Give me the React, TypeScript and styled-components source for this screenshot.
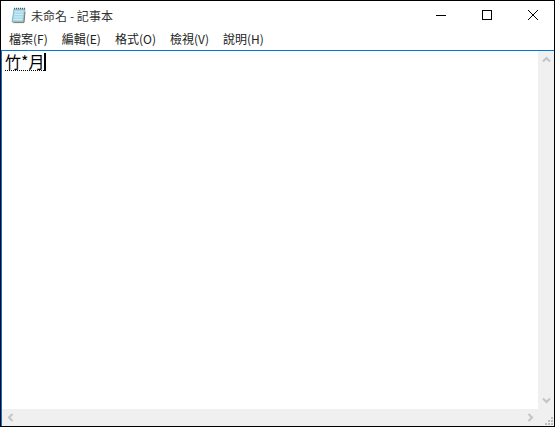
import React from "react";
import styled, { createGlobalStyle } from "styled-components";

const Global = createGlobalStyle`
  html, body { margin: 0; padding: 0; background: #fff; }
  body { font-family: "Noto Sans CJK TC", "Liberation Sans", sans-serif; }
`;

const Win = styled.div`
  box-sizing: border-box;
  width: 555px;
  height: 427px;
  border: 1px solid #000;
  display: flex;
  flex-direction: column;
  overflow: hidden;
  background: #fff;
`;
const TitleBar = styled.div`
  height: 29px;
  display: flex;
  align-items: flex-start;
  flex: none;
`;
const AppIcon = styled.svg`
  width: 16px;
  height: 17px;
  margin: 6px 5px 0 9px;
  flex: none;
`;
const Title = styled.div`
  flex: 1;
  font-size: 12px;
  line-height: 17px;
  padding-top: 6px;
  color: #333;
  letter-spacing: 0.05px;
`;
const Controls = styled.div`
  display: flex;
  height: 100%;
`;
const Ctl = styled.div`
  box-sizing: border-box;
  width: 46px;
  height: 27px;
  padding-left: 4px;
  display: flex;
  align-items: center;
  justify-content: center;
`;
const MenuBar = styled.div`
  height: 20px;
  display: flex;
  flex: none;
  gap: 14px;
  padding-left: 8px;
  align-items: flex-start;
  border-bottom: 1px solid #0078d7;
  font-size: 12px;
  color: #222;
`;
const MenuItem = styled.span`
  display: block;
  line-height: 18px;
  white-space: nowrap;
`;
const Body = styled.div`
  flex: 1;
  display: grid;
  grid-template-columns: 1fr 16px;
  grid-template-rows: 1fr 17px;
  min-height: 0;
  border-left: 1px solid #0078d7;
`;
const Editor = styled.div`
  padding: 2px 0 0 3px;
  display: flex;
  align-items: flex-start;
  background: #fff;
`;
const Composition = styled.span`
  font-family: "Noto Sans CJK TC", sans-serif;
  font-size: 16px;
  line-height: 17px;
  height: 17px;
  color: #000;
  border-bottom: 1px dotted #000;
  white-space: nowrap;
  display: block;
`;
const Caret = styled.span`
  display: block;
  width: 2px;
  height: 18px;
  background: #000;
`;
const VTrack = styled.div`
  background: #f0f0f0;
  display: flex;
  flex-direction: column;
  justify-content: space-between;
`;
const HTrack = styled.div`
  background: #f0f0f0;
  display: flex;
  justify-content: space-between;
`;
const Corner = styled.div`
  background: #f0f0f0;
  display: flex;
  align-items: flex-end;
  justify-content: flex-end;
`;
const ArrowBox = styled.div`
  width: 16px;
  height: 17px;
  display: flex;
  align-items: center;
  justify-content: center;
`;

const Arrow = ({ d }: { d: string }) => (
  <svg width="9" height="9" viewBox="0 0 9 9">
    <path d={d} fill="none" stroke="#c4c4c4" strokeWidth="2" />
  </svg>
);

export default function App() {
  const menus = ["檔案(F)", "編輯(E)", "格式(O)", "檢視(V)", "說明(H)"];
  return (
    <>
      <Global />
      <Win>
        <TitleBar>
          <AppIcon viewBox="0 0 16 17">
            <path d="M4 2 L15 2 L13.5 15 L2 15 Z" fill="#a6d6ea" stroke="#6fa9c0" strokeWidth="0.8" />
            <path d="M3.4 15.6 L14 15.6 L15 5" fill="none" stroke="#8a7a5a" strokeWidth="1" />
            <path d="M4 1.5 H15" stroke="#555" strokeWidth="1.4" strokeDasharray="1 1" />
            <path d="M4.5 5 H13 M4.2 7.5 H12.8 M4 10 H12.5 M3.7 12.5 H12.2" stroke="#d4eef8" strokeWidth="1" />
          </AppIcon>
          <Title>未命名 - 記事本</Title>
          <Controls>
            <Ctl>
              <svg width="10" height="10" viewBox="0 0 10 10"><path d="M0 5.5 H10" stroke="#000" strokeWidth="1" /></svg>
            </Ctl>
            <Ctl>
              <svg width="10" height="10" viewBox="0 0 10 10"><rect x="0.5" y="0.5" width="9" height="9" fill="none" stroke="#000" /></svg>
            </Ctl>
            <Ctl>
              <svg width="10" height="10" viewBox="0 0 10 10"><path d="M0 0 L10 10 M10 0 L0 10" stroke="#000" strokeWidth="1" /></svg>
            </Ctl>
          </Controls>
        </TitleBar>
        <MenuBar>
          {menus.map((m) => (
            <MenuItem key={m}>{m}</MenuItem>
          ))}
        </MenuBar>
        <Body>
          <Editor>
            <Composition>竹*月</Composition>
            <Caret />
          </Editor>
          <VTrack>
            <ArrowBox><Arrow d="M1 6.5 L4.5 3 L8 6.5" /></ArrowBox>
            <ArrowBox><Arrow d="M1 2.5 L4.5 6 L8 2.5" /></ArrowBox>
          </VTrack>
          <HTrack>
            <ArrowBox><Arrow d="M6.5 1 L3 4.5 L6.5 8" /></ArrowBox>
            <ArrowBox><Arrow d="M2.5 1 L6 4.5 L2.5 8" /></ArrowBox>
          </HTrack>
          <Corner>
            <svg width="10" height="10" viewBox="0 0 10 10" fill="#bdbdbd">
              <rect x="7" y="1" width="2" height="2" />
              <rect x="4" y="4" width="2" height="2" />
              <rect x="7" y="4" width="2" height="2" />
              <rect x="1" y="7" width="2" height="2" />
              <rect x="4" y="7" width="2" height="2" />
              <rect x="7" y="7" width="2" height="2" />
            </svg>
          </Corner>
        </Body>
      </Win>
    </>
  );
}
